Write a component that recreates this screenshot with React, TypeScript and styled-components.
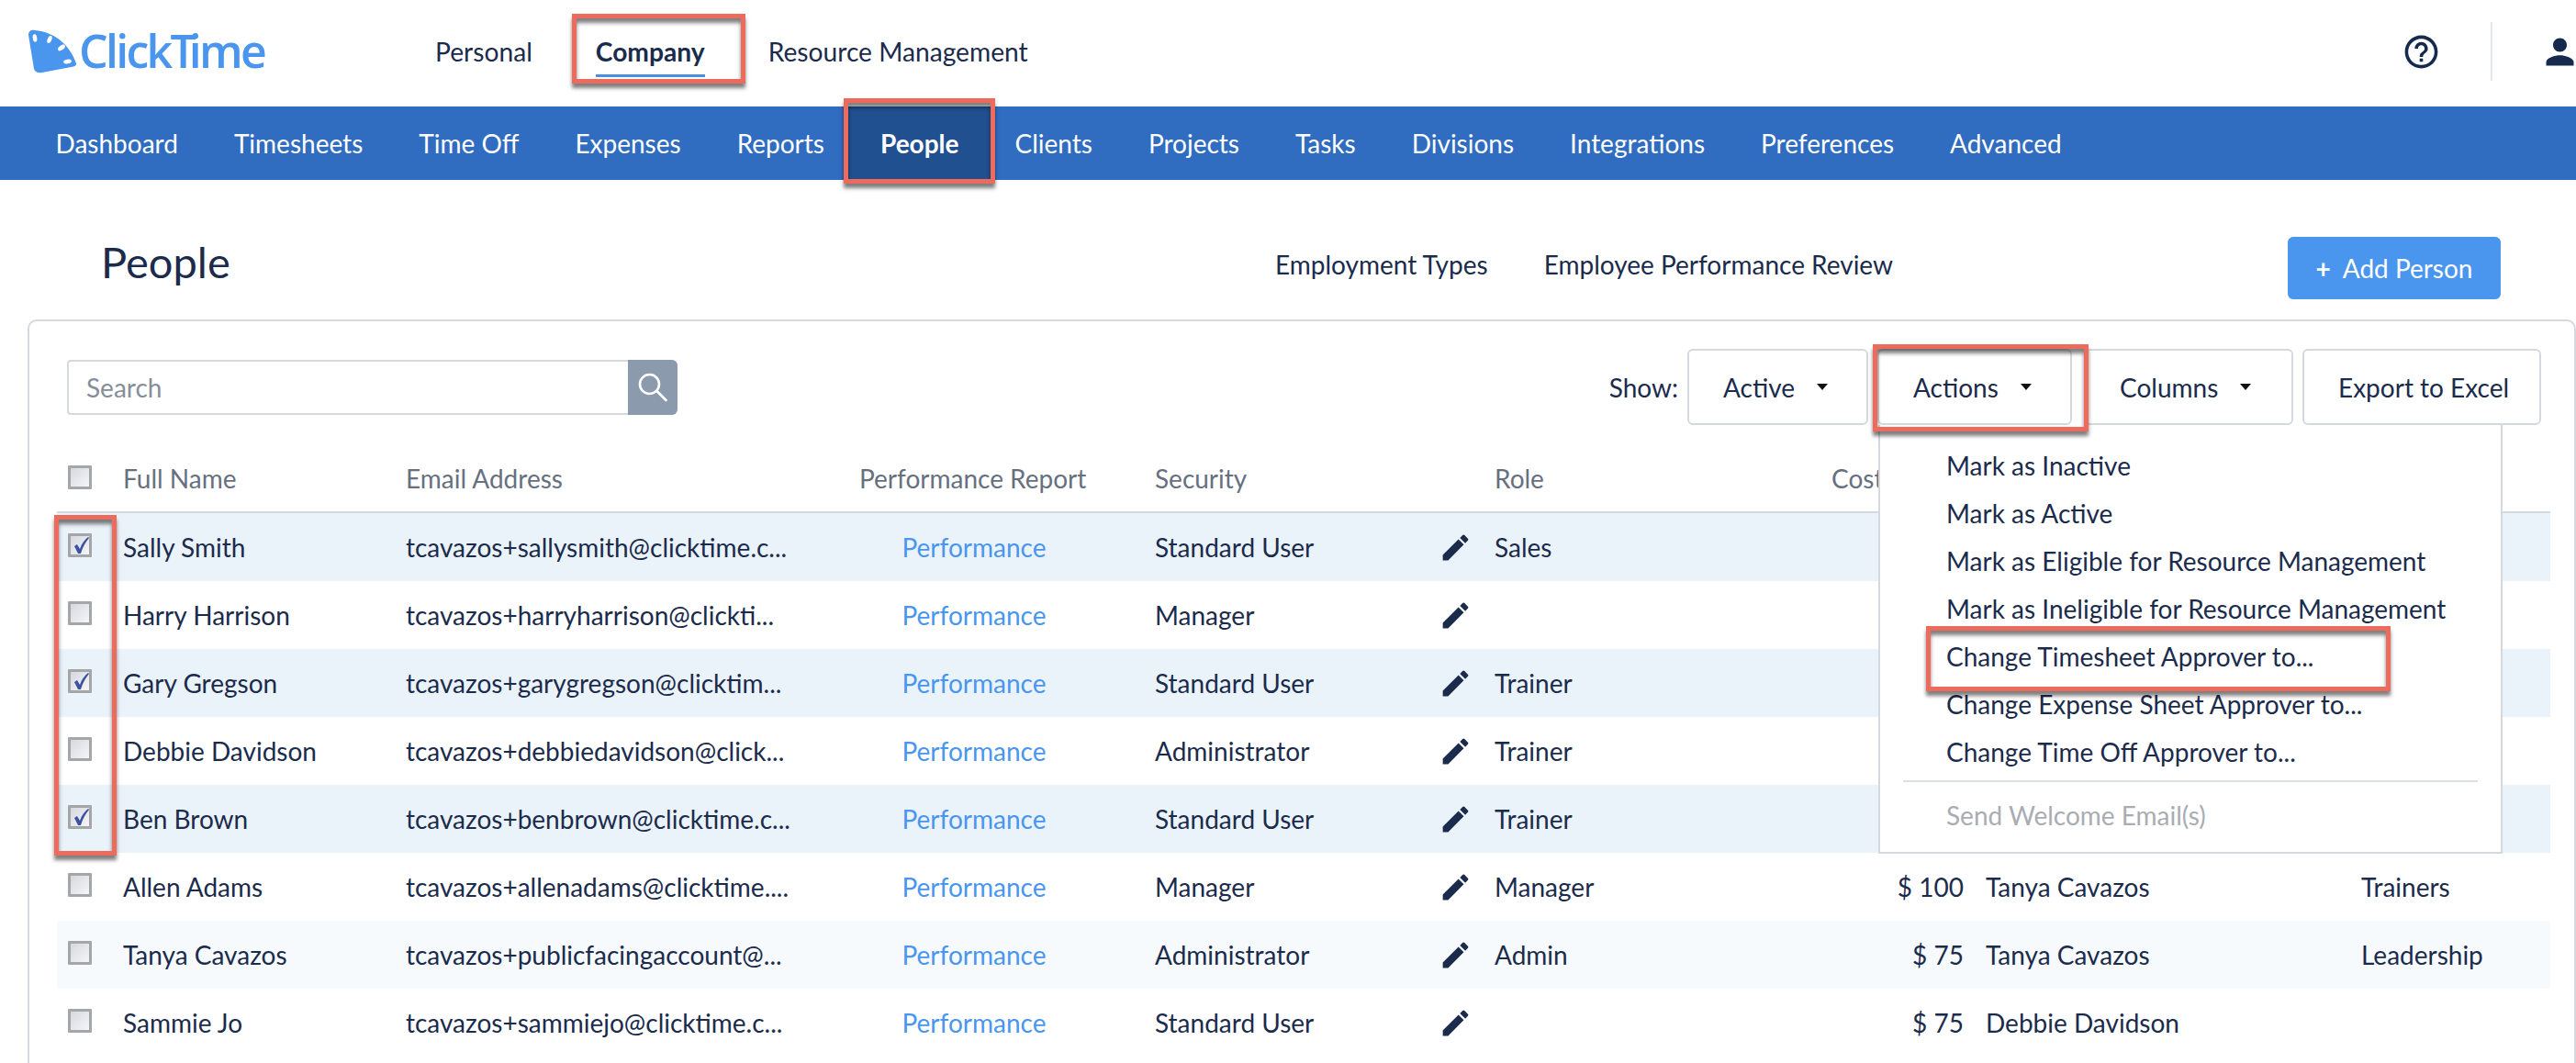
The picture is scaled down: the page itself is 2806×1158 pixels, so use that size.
import React from 'react';
import { MdEdit, MdHelpOutline, MdPerson } from 'react-icons/md';
import styled, { createGlobalStyle } from 'styled-components';

const GlobalStyle = createGlobalStyle`
  html, body {
    margin: 0;
    padding: 0;
    background: #fff;
    overflow: hidden;
  }
  body {
    width: 2806px;
    height: 1158px;
    font-family: Lato, "Open Sans", sans-serif;
    font-size: 28px;
    color: #1b2b4c;
  }
  * {
    box-sizing: border-box;
  }
`;

const Page = styled.div`
  width: 2806px;
  height: 1158px;
  overflow: hidden;
`;

/* red callout frames drawn over the screenshot */
const Callout = styled.span<{ $top: number; $right: number; $bottom: number; $left: number }>`
  position: absolute;
  top: ${(p) => p.$top}px;
  right: ${(p) => p.$right}px;
  bottom: ${(p) => p.$bottom}px;
  left: ${(p) => p.$left}px;
  border: 5px solid #ec6b5c;
  box-shadow: 0 5px 4px rgba(0, 0, 0, 0.5), inset 0 5px 4px rgba(0, 0, 0, 0.5);
  pointer-events: none;
  z-index: 5;
`;

const TopBar = styled.header`
  display: flex;
  align-items: center;
  height: 116px;
  padding: 0 0 4px 30px;
`;

const Logo = styled.div`
  display: flex;
  align-items: center;
  width: 444px;
  color: #4a96ee;
`;

const LogoText = styled.span`
  margin: -3px 0 0 2px;
  font-family: "Open Sans", sans-serif;
  font-size: 50px;
  font-weight: 600;
  letter-spacing: -2.7px;
  line-height: 1;
`;

const LogoT = styled.span`
  letter-spacing: -8px;
`;

const ProductNav = styled.nav`
  display: flex;
  gap: 69px;
  font-size: 28.2px;
`;

const ProductLink = styled.a<{ $active?: boolean }>`
  position: relative;
  font-weight: ${(p) => (p.$active ? 700 : 400)};
  line-height: 34px;
  &::after {
    content: '';
    display: ${(p) => (p.$active ? 'block' : 'none')};
    position: absolute;
    left: 0;
    right: 0;
    bottom: -11px;
    height: 3px;
    background: #4a90e2;
  }
`;

const TopIcons = styled.div`
  display: flex;
  align-items: center;
  margin: 0 -4.5px 0 auto;
  color: #152a4d;
  svg {
    display: block;
  }
`;

const IconDivider = styled.div`
  width: 2px;
  height: 64px;
  margin: 0 50.5px 0 53.6px;
  background: #e2e7ef;
`;

const MainNav = styled.nav`
  display: flex;
  align-items: stretch;
  height: 80px;
  padding-left: 30px;
  background: #306cc0;
`;

const MainTab = styled.a<{ $active?: boolean }>`
  position: relative;
  display: flex;
  align-items: center;
  padding: 0 ${(p) => (p.$active ? 34.5 : 30.5)}px;
  margin: 0 ${(p) => (p.$active ? -4 : 0)}px;
  color: #fff;
  font-weight: ${(p) => (p.$active ? 700 : 400)};
  background: ${(p) => (p.$active ? '#20508f' : 'transparent')};
`;

const PageHead = styled.div`
  display: flex;
  align-items: center;
  height: 152px;
  padding: 40px 82px 0 110px;
`;

const PageTitle = styled.h1`
  margin: -14px 0 0;
  font-size: 47px;
  font-weight: 400;
`;

const HeadLinks = styled.div`
  display: flex;
  gap: 61px;
  margin: -8px 430px 0 auto;
`;

const AddButton = styled.button`
  display: flex;
  align-items: center;
  justify-content: center;
  gap: 13px;
  width: 232px;
  height: 68px;
  border: 0;
  border-radius: 6px;
  background: #4a96ee;
  color: #fff;
  font: inherit;
`;

const PlusSign = styled.span`
  font-weight: 700;
`;

const Panel = styled.section`
  width: 2776px;
  height: 820px;
  margin-left: 30px;
  padding: 30px 0 0 30px;
  border: solid #d5d9df;
  border-width: 2px 2px 0 2px;
  border-radius: 10px 10px 0 0;
`;

const Toolbar = styled.div`
  display: flex;
  align-items: center;
  height: 83px;
  padding: 0 36px 0 11px;
`;

const SearchBox = styled.div`
  display: flex;
  width: 665px;
  height: 60px;
`;

const SearchField = styled.div`
  flex: 1;
  display: flex;
  align-items: center;
  padding-left: 19px;
  border: 2px solid #d5d9df;
  border-right: 0;
  border-radius: 4px 0 0 4px;
  color: #868e9a;
`;

const SearchButton = styled.div`
  display: flex;
  align-items: center;
  justify-content: center;
  width: 54px;
  background: #8b9bad;
  border-radius: 0 6px 6px 0;
`;

const ShowLabel = styled.span`
  margin: 0 0 0 auto;
`;

const ToolButton = styled.button<{ $width: number }>`
  position: relative;
  display: flex;
  align-items: center;
  width: ${(p) => p.$width}px;
  height: 83px;
  padding: 0 0 0 37px;
  margin-left: 10px;
  border: 2px solid #d5d9df;
  border-radius: 6px;
  background: #fff;
  color: #1b2b4c;
  font: inherit;
`;

const Caret = styled.i`
  width: 0;
  height: 0;
  margin-left: 24px;
  border-style: solid;
  border-width: 7px 6px 0;
  border-color: #111 transparent transparent;
`;

const ActionsWrap = styled.div`
  position: relative;
  margin-left: 10px;
  margin-right: 3px;
  ${ToolButton} {
    margin-left: 0;
  }
`;

const Menu = styled.div`
  position: absolute;
  top: 83px;
  left: 1px;
  width: 680px;
  height: 467px;
  padding: 18px 0 0;
  background: #fff;
  border: solid #d5d9df;
  border-width: 0 2px 2px;
  z-index: 4;
`;

const MenuItem = styled.div<{ $disabled?: boolean }>`
  position: relative;
  display: flex;
  align-items: center;
  height: 52px;
  padding-left: 72px;
  color: ${(p) => (p.$disabled ? '#a9adb3' : '#1b2b4c')};
  white-space: nowrap;
`;

const MenuDivider = styled.div`
  height: 2px;
  margin: 5px 25px 10px;
  background: #dcdfe3;
`;

const TableRow = styled.div<{ $tone?: 'selected' | 'zebra' | 'plain' }>`
  display: grid;
  grid-template-columns: 72px 308px 494px 322px 314px 56px 367px 144px 433px 206px;
  align-items: center;
  width: 2716px;
  height: 74px;
  background: ${(p) => (p.$tone === 'selected' ? '#ebf3fa' : p.$tone === 'zebra' ? '#f6fafc' : '#fff')};
`;

const HeaderRow = styled(TableRow)`
  height: 96px;
  padding-top: 22px;
  border-bottom: 2px solid #d5d9df;
  color: #66707f;
`;

const TableBody = styled.div`
  position: relative;
  width: 2716px;
`;

const CheckCell = styled.div`
  align-self: start;
  margin-top: 22px;
  padding-left: 12px;
`;

const CheckBox = styled.span`
  display: block;
  position: relative;
  width: 26px;
  height: 26px;
  border: 3px solid #a5a6a9;
  border-radius: 1px;
  background: linear-gradient(135deg, #d6d8de, #f6f6f8);
  svg {
    position: absolute;
    left: 1px;
    top: -1px;
  }
`;

const PerfCell = styled.div`
  padding-right: 72px;
  text-align: center;
`;

const PerfLink = styled.a`
  color: #4a96ee;
`;

const EditCell = styled.div`
  display: flex;
  margin-left: -5px;
  svg {
    display: block;
  }
`;

const CostCell = styled.div`
  text-align: right;
`;

const ApproverCell = styled.div`
  padding-left: 24px;
`;

interface Person {
  name: string;
  email: string;
  security: string;
  role?: string;
  cost?: string;
  approver?: string;
  division?: string;
  checked?: boolean;
}

const people: Person[] = [
  { name: 'Sally Smith', email: 'tcavazos+sallysmith@clicktime.c...', security: 'Standard User', role: 'Sales', checked: true },
  { name: 'Harry Harrison', email: 'tcavazos+harryharrison@clickti...', security: 'Manager' },
  { name: 'Gary Gregson', email: 'tcavazos+garygregson@clicktim...', security: 'Standard User', role: 'Trainer', checked: true },
  { name: 'Debbie Davidson', email: 'tcavazos+debbiedavidson@click...', security: 'Administrator', role: 'Trainer' },
  { name: 'Ben Brown', email: 'tcavazos+benbrown@clicktime.c...', security: 'Standard User', role: 'Trainer', checked: true },
  { name: 'Allen Adams', email: 'tcavazos+allenadams@clicktime....', security: 'Manager', role: 'Manager', cost: '$ 100', approver: 'Tanya Cavazos', division: 'Trainers' },
  { name: 'Tanya Cavazos', email: 'tcavazos+publicfacingaccount@...', security: 'Administrator', role: 'Admin', cost: '$ 75', approver: 'Tanya Cavazos', division: 'Leadership' },
  { name: 'Sammie Jo', email: 'tcavazos+sammiejo@clicktime.c...', security: 'Standard User', cost: '$ 75', approver: 'Debbie Davidson' },
];

const tabs = ['Dashboard', 'Timesheets', 'Time Off', 'Expenses', 'Reports', 'People', 'Clients', 'Projects', 'Tasks', 'Divisions', 'Integrations', 'Preferences', 'Advanced'];

function LogoMark() {
  return (
    <svg width="54" height="48" viewBox="0 0 54 48">
      <path
        d="M1 6 C1 2 4 0 8 1 C30 3 46 17 53 37 C53.500 39 52 40 50 40.500 L16 47 C11 48 8 46 7 43 Z"
        fill="#4a96ee"
      />
      <ellipse cx="8" cy="9.500" rx="2.300" ry="4.200" fill="#fff" transform="rotate(-8 8 9.500)" />
      <ellipse cx="24" cy="11" rx="2.300" ry="4.200" fill="#fff" transform="rotate(22 24 11)" />
      <ellipse cx="37" cy="20" rx="2.400" ry="4.500" fill="#fff" transform="rotate(55 37 20)" />
      <ellipse cx="43.500" cy="35" rx="2.400" ry="4.500" fill="#fff" transform="rotate(80 43.500 35)" />
    </svg>
  );
}

function SearchIcon() {
  return (
    <svg width="32" height="32" viewBox="0 0 32 32" fill="none" stroke="#fff" strokeWidth="2.600" strokeLinecap="round">
      <circle cx="12.500" cy="12.500" r="10.500" />
      <line x1="20.500" y1="20" x2="30.500" y2="30" />
    </svg>
  );
}

function CheckMark() {
  return (
    <svg width="20" height="22" viewBox="0 0 20 22">
      <path d="M3 12 L6 10 L9 15 C11 9 14 5 18 2 L19 3 C15 8 12 13 10 20 L7 20 Z" fill="#3d51a3" />
    </svg>
  );
}

export default function App() {
  return (
    <Page>
      <GlobalStyle />
      <TopBar>
        <Logo>
          <LogoMark />
          <LogoText>
            Click
            <LogoT>T</LogoT>
            ime
          </LogoText>
        </Logo>
        <ProductNav>
          <ProductLink>Personal</ProductLink>
          <ProductLink $active>
            Company
            <Callout $top={-24} $right={-44} $bottom={-18} $left={-26} />
          </ProductLink>
          <ProductLink>Resource Management</ProductLink>
        </ProductNav>
        <TopIcons>
          <MdHelpOutline size={43} />
          <IconDivider />
          <MdPerson size={45} />
        </TopIcons>
      </TopBar>

      <MainNav>
        {tabs.map((tab) => (
          <MainTab key={tab} $active={tab === 'People'}>
            {tab}
            {tab === 'People' && <Callout $top={-9} $right={-5} $bottom={-4} $left={-5} />}
          </MainTab>
        ))}
      </MainNav>

      <PageHead>
        <PageTitle>People</PageTitle>
        <HeadLinks>
          <span>Employment Types</span>
          <span>Employee Performance Review</span>
        </HeadLinks>
        <AddButton>
          <PlusSign>+</PlusSign>
          <span>Add Person</span>
        </AddButton>
      </PageHead>

      <Panel>
        <Toolbar>
          <SearchBox>
            <SearchField>Search</SearchField>
            <SearchButton>
              <SearchIcon />
            </SearchButton>
          </SearchBox>
          <ShowLabel>Show:</ShowLabel>
          <ToolButton $width={197}>
            Active
            <Caret />
          </ToolButton>
          <ActionsWrap>
            <ToolButton $width={212}>
              Actions
              <Caret />
            </ToolButton>
            <Callout $top={-5} $right={-18} $bottom={-7} $left={-5} />
            <Menu>
              <MenuItem>Mark as Inactive</MenuItem>
              <MenuItem>Mark as Active</MenuItem>
              <MenuItem>Mark as Eligible for Resource Management</MenuItem>
              <MenuItem>Mark as Ineligible for Resource Management</MenuItem>
              <MenuItem>
                Change Timesheet Approver to...
                <Callout $top={-7} $right={120} $bottom={-12} $left={50} />
              </MenuItem>
              <MenuItem>Change Expense Sheet Approver to...</MenuItem>
              <MenuItem>Change Time Off Approver to...</MenuItem>
              <MenuDivider />
              <MenuItem $disabled>Send Welcome Email(s)</MenuItem>
            </Menu>
          </ActionsWrap>
          <ToolButton $width={228}>
            Columns
            <Caret />
          </ToolButton>
          <ToolButton $width={260}>Export to Excel</ToolButton>
        </Toolbar>

        <HeaderRow>
          <CheckCell>
            <CheckBox />
          </CheckCell>
          <div>Full Name</div>
          <div>Email Address</div>
          <div>Performance Report</div>
          <div>Security</div>
          <div />
          <div>Role</div>
          <div>Cost</div>
        </HeaderRow>

        <TableBody>
          {people.map((person, index) => (
            <TableRow
              key={person.name}
              $tone={person.checked ? 'selected' : index % 2 === 0 ? 'zebra' : 'plain'}
            >
              <CheckCell>
                <CheckBox>{person.checked && <CheckMark />}</CheckBox>
              </CheckCell>
              <div>{person.name}</div>
              <div>{person.email}</div>
              <PerfCell>
                <PerfLink>Performance</PerfLink>
              </PerfCell>
              <div>{person.security}</div>
              <EditCell>
                <MdEdit size={37} />
              </EditCell>
              <div>{person.role}</div>
              <CostCell>{person.cost}</CostCell>
              <ApproverCell>{person.approver}</ApproverCell>
              <div>{person.division}</div>
            </TableRow>
          ))}
          <Callout $top={2} $right={2651} $bottom={219} $left={-3} />
        </TableBody>
      </Panel>
    </Page>
  );
}
